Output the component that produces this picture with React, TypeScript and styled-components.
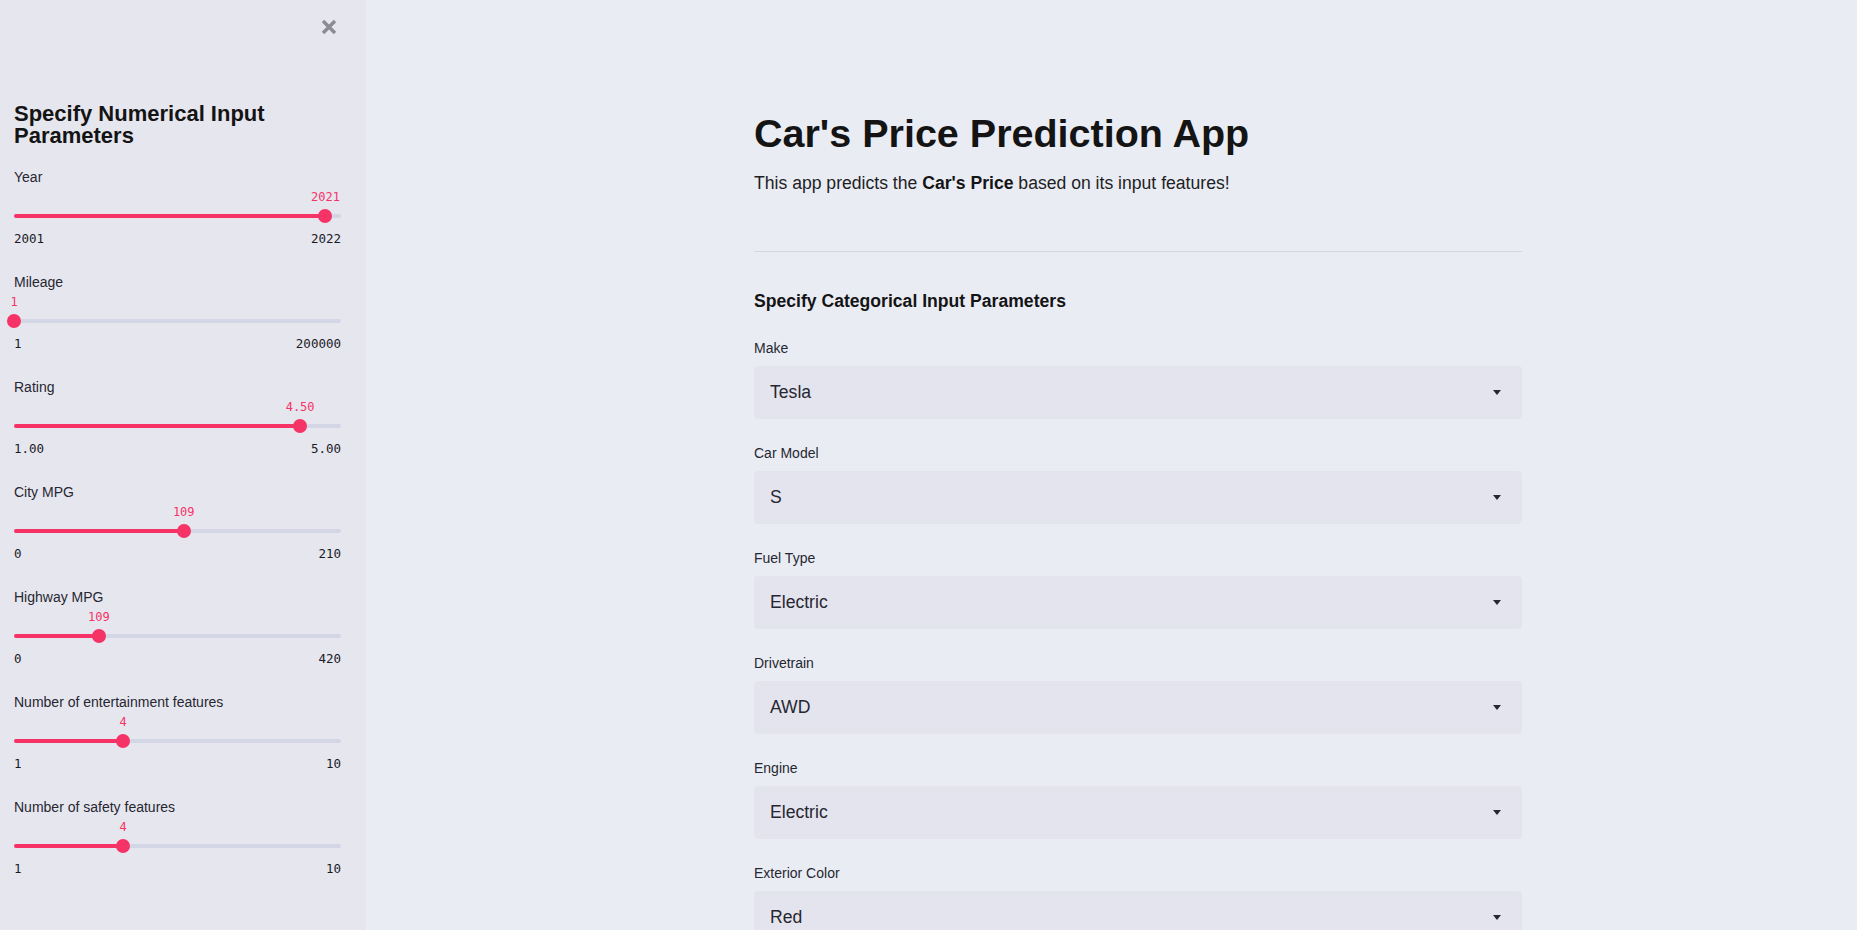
import styled, { createGlobalStyle } from "styled-components"

const GlobalStyle = createGlobalStyle`
html, body {
    margin: 0;
    padding: 0;
    background-color: #eaecf4;
}
body {
    font-family: "Liberation Sans", Arial, sans-serif;
    color: #1a1a1f;
    overflow: hidden;
}
`

const sliders = [
    { label: "Year", min: 2001, max: 2022, value: 2021, digits: 0 },
    { label: "Mileage", min: 1, max: 200000, value: 1, digits: 0 },
    { label: "Rating", min: 1, max: 5, value: 4.5, digits: 2 },
    { label: "City MPG", min: 0, max: 210, value: 109, digits: 0 },
    { label: "Highway MPG", min: 0, max: 420, value: 109, digits: 0 },
    { label: "Number of entertainment features", min: 1, max: 10, value: 4, digits: 0 },
    { label: "Number of safety features", min: 1, max: 10, value: 4, digits: 0 },
]

const selects = [
    { label: "Make", value: "Tesla" },
    { label: "Car Model", value: "S" },
    { label: "Fuel Type", value: "Electric" },
    { label: "Drivetrain", value: "AWD" },
    { label: "Engine", value: "Electric" },
    { label: "Exterior Color", value: "Red" },
]

const Slider = ({ label, min, max, value, digits }: { label: string, min: number, max: number, value: number, digits: number }) => {
    const pct = ((value - min) / (max - min)) * 100
    return (
        <SliderBlock>
            <SliderLabel>{label}</SliderLabel>
            <ValueRow>
                <Value style={{ left: `${pct}%` }}>{value.toFixed(digits)}</Value>
            </ValueRow>
            <Rail>
                <Track>
                    <Fill style={{ width: `${pct}%` }} />
                </Track>
                <Thumb style={{ left: `${pct}%` }} />
            </Rail>
            <Bounds>
                <span>{min.toFixed(digits)}</span>
                <span>{max.toFixed(digits)}</span>
            </Bounds>
        </SliderBlock>
    )
}

const SelectField = ({ label, value }: { label: string, value: string }) => (
    <Field>
        <FieldLabel>{label}</FieldLabel>
        <SelectBox>
            <span>{value}</span>
            <svg width="8" height="5" viewBox="0 0 8 5">
                <path d="M0 0 H8 L4 5 Z" fill="#262730" />
            </svg>
        </SelectBox>
    </Field>
)

const App = () => {
    return (
        <>
            <GlobalStyle />
            <Page>
                <Sidebar>
                    <CloseRow>
                        <svg width="16" height="16" viewBox="0 0 16 16">
                            <path d="M2 2 L14 14 M14 2 L2 14" stroke="#8b8b93" strokeWidth="3.4" strokeLinecap="butt" />
                        </svg>
                    </CloseRow>
                    <SideTitle>Specify Numerical Input Parameters</SideTitle>
                    {sliders.map((s) => (
                        <Slider key={s.label} {...s} />
                    ))}
                </Sidebar>
                <Main>
                    <Column>
                        <Title>Car's Price Prediction App</Title>
                        <Intro>This app predicts the <b>Car's Price</b> based on its input features!</Intro>
                        <Divider />
                        <SectionTitle>Specify Categorical Input Parameters</SectionTitle>
                        {selects.map((f) => (
                            <SelectField key={f.label} {...f} />
                        ))}
                    </Column>
                </Main>
            </Page>
        </>
    )
}

export default App

const Page = styled.div`
display: flex;
width: 100%;
height: 930px;
overflow: hidden;
`
const Sidebar = styled.div`
width: 366px;
flex-shrink: 0;
height: 100%;
background-color: #e6e6ef;
box-sizing: border-box;
padding: 0 25px 0 14px;
display: flex;
flex-direction: column;
`
const CloseRow = styled.div`
height: 54px;
display: flex;
align-items: center;
justify-content: flex-end;
margin-right: 4px;
svg{
    display: block;
}
`
const SideTitle = styled.h2`
margin: 49px 0 0 0;
font-size: 22px;
line-height: 22px;
font-weight: 700;
color: #141414;
`
const SliderBlock = styled.div`
margin-top: 20px;
margin-bottom: 5px;
`
const SliderLabel = styled.div`
font-size: 14px;
line-height: 20px;
color: #262730;
`
const ValueRow = styled.div`
position: relative;
height: 16px;
margin-top: 2px;
`
const Value = styled.div`
position: absolute;
top: 0;
transform: translateX(-50%);
font-family: "DejaVu Sans Mono", "Liberation Mono", monospace;
font-size: 12px;
line-height: 16px;
color: #f63366;
white-space: nowrap;
`
const Rail = styled.div`
position: relative;
height: 14px;
margin-top: 4px;
display: flex;
align-items: center;
`
const Track = styled.div`
width: 100%;
height: 4px;
border-radius: 2px;
background-color: #d3d6e4;
overflow: hidden;
`
const Fill = styled.div`
height: 100%;
background-color: #f63366;
`
const Thumb = styled.div`
position: absolute;
top: 0;
width: 14px;
height: 14px;
border-radius: 50%;
background-color: #f63366;
transform: translateX(-50%);
`
const Bounds = styled.div`
display: flex;
justify-content: space-between;
margin-top: 8px;
font-family: "DejaVu Sans Mono", "Liberation Mono", monospace;
font-size: 12.5px;
line-height: 16px;
color: #1a1a1f;
`
const Main = styled.div`
flex: 1;
height: 100%;
padding-left: 53px;
display: flex;
justify-content: center;
`
const Column = styled.div`
width: 768px;
flex-shrink: 0;
padding-top: 109px;
`
const Title = styled.h1`
margin: 0;
font-size: 39.5px;
line-height: 48px;
font-weight: 700;
color: #141414;
`
const Intro = styled.p`
margin: 14px 0 0 0;
font-size: 17.6px;
line-height: 24px;
color: #1e1e24;
b{
    font-weight: 700;
    color: #141414;
}
`
const Divider = styled.hr`
margin: 56px 0 0 0;
border: none;
height: 1px;
background-color: #d4d6e0;
`
const SectionTitle = styled.h3`
margin: 39px 0 27px 0;
font-size: 17.6px;
line-height: 20px;
font-weight: 700;
color: #141414;
`
const Field = styled.div`
display: flex;
flex-direction: column;
gap: 8px;
margin-bottom: 24px;
`
const FieldLabel = styled.div`
font-size: 14px;
line-height: 20px;
color: #262730;
`
const SelectBox = styled.div`
height: 53px;
border-radius: 4px;
background-color: #e4e4ee;
display: flex;
align-items: center;
justify-content: space-between;
padding: 0 21px 0 16px;
font-size: 17.6px;
color: #262730;
svg{
    display: block;
}
`
